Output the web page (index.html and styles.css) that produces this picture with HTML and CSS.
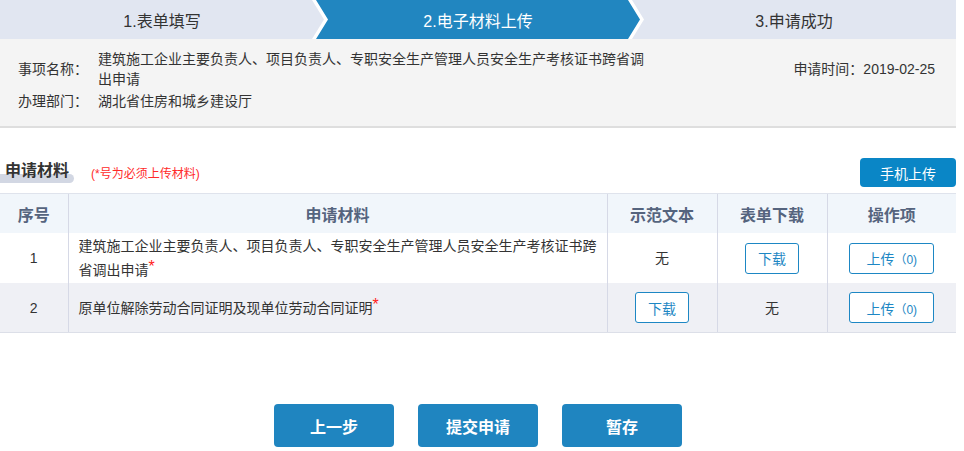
FILE: index.html
```html
<!DOCTYPE html>
<html lang="zh-CN">
<head>
    <meta charset="UTF-8">
    <meta name="viewport" content="width=device-width, initial-scale=1.0">
    <title>电子材料上传</title>
    <link rel="stylesheet" href="styles.css">
</head>
<body>
    <div class="page">
        <div class="steps">
            <div class="step step-first">1.表单填写</div>
            <div class="step step-mid active">2.电子材料上传</div>
            <div class="step step-last">3.申请成功</div>
        </div>

        <div class="info">
            <span class="info-label">事项名称：</span>
            <span class="info-value">建筑施工企业主要负责人、项目负责人、专职安全生产管理人员安全生产考核证书跨省调出申请</span>
            <span class="info-time">申请时间：2019-02-25</span>
            <span class="info-label">办理部门：</span>
            <span class="info-value">湖北省住房和城乡建设厅</span>
        </div>

        <div class="section-head">
            <h3 class="section-title">申请材料</h3>
            <span class="section-note">(*号为必须上传材料)</span>
            <button class="btn-mobile">手机上传</button>
        </div>

        <table class="materials">
            <colgroup>
                <col class="col-no">
                <col class="col-name">
                <col class="col-sample">
                <col class="col-form">
                <col class="col-op">
            </colgroup>
            <thead>
                <tr>
                    <th>序号</th>
                    <th>申请材料</th>
                    <th>示范文本</th>
                    <th>表单下载</th>
                    <th>操作项</th>
                </tr>
            </thead>
            <tbody>
                <tr>
                    <td>1</td>
                    <td class="name">建筑施工企业主要负责人、项目负责人、专职安全生产管理人员安全生产考核证书跨省调出申请<sup class="req">*</sup></td>
                    <td>无</td>
                    <td><button class="btn-line btn-down">下载</button></td>
                    <td><button class="btn-line btn-up">上传<span class="count">（0)</span></button></td>
                </tr>
                <tr>
                    <td>2</td>
                    <td class="name">原单位解除劳动合同证明及现单位劳动合同证明<sup class="req">*</sup></td>
                    <td><button class="btn-line btn-down">下载</button></td>
                    <td>无</td>
                    <td><button class="btn-line btn-up">上传<span class="count">（0)</span></button></td>
                </tr>
            </tbody>
        </table>

        <div class="actions">
            <button class="btn-main">上一步</button>
            <button class="btn-main">提交申请</button>
            <button class="btn-main">暂存</button>
        </div>
    </div>
</body>
</html>
```
FILE: styles.css
```css
body {
    margin: 0;
    background: #ffffff;
    font-family: "Liberation Sans", "Noto Sans CJK SC", sans-serif;
    font-size: 14px;
    color: #333;
}

.page {
    width: 956px;
}

/* steps */
.steps {
    display: flex;
    height: 39px;
}

.step {
    width: 324px;
    flex: none;
    display: flex;
    align-items: center;
    justify-content: center;
    background: #e1e6f1;
    color: #333;
    font-size: 16px;
}

.step-first {
    clip-path: polygon(0 0, calc(100% - 12px) 0, 100% 50%, calc(100% - 12px) 100%, 0 100%);
}

.step-mid {
    margin-left: -8px;
    clip-path: polygon(0 0, calc(100% - 12px) 0, 100% 50%, calc(100% - 12px) 100%, 0 100%, 12px 50%);
}

.step-last {
    margin-left: -8px;
    clip-path: polygon(0 0, 100% 0, 100% 100%, 0 100%, 12px 50%);
}

.step.active {
    background: #2186c0;
    color: #ffffff;
}

/* info */
.info {
    display: grid;
    grid-template-columns: 80px 550px 1fr;
    row-gap: 2px;
    align-items: center;
    padding: 10px 21px 15px 18px;
    background: #f4f4f4;
    border-bottom: 2px solid #dedede;
    line-height: 20px;
    font-size: 14px;
}

.info-time {
    justify-self: end;
}

/* section head */
.section-head {
    display: flex;
    align-items: center;
    height: 29px;
    margin: 30px 0 6px;
}

.section-title {
    position: relative;
    margin: -3px 0 0 5px;
    font-size: 16px;
    line-height: 22px;
    color: #333;
    z-index: 0;
}

.section-title::after {
    content: "";
    position: absolute;
    left: -5px;
    right: -5px;
    top: 14px;
    height: 9px;
    border-radius: 0 5px 5px 0;
    background: #d2d7e3;
    z-index: -1;
}

.section-note {
    margin-left: 22px;
    font-size: 12px;
    color: #ff2a2a;
}

.btn-mobile {
    margin-left: auto;
    width: 96px;
    height: 29px;
    border: none;
    border-radius: 4px;
    background: #0a86c6;
    color: #ffffff;
    font-family: inherit;
    font-size: 14px;
    cursor: pointer;
}

/* table */
.materials {
    width: 956px;
    border-collapse: collapse;
    table-layout: fixed;
}

.col-no { width: 68px; }
.col-name { width: 539px; }
.col-sample { width: 110px; }
.col-form { width: 110px; }
.col-op { width: 129px; }

.materials th,
.materials td {
    border-left: 1px solid #d6d9e6;
    text-align: center;
    padding: 0;
}

.materials th:first-child,
.materials td:first-child {
    border-left: none;
}

.materials th {
    height: 39px;
    background: #f1f6fb;
    border-top: 1px solid #dfe3ec;
    color: #55647e;
    font-size: 16px;
    font-weight: bold;
}

.materials td {
    height: 50px;
    font-size: 14px;
    line-height: 24px;
}

.materials tbody tr:nth-child(2) td {
    background: #eff0f5;
    border-bottom: 1px solid #dcdfe8;
    height: 49px;
}

.materials td.name {
    text-align: left;
    padding: 0 2px 0 10px;
}

.req {
    color: #ff1a1a;
    font-size: 16px;
    line-height: 0;
    vertical-align: 3px;
}

.btn-line {
    height: 31px;
    border: 1px solid #1d87c4;
    border-radius: 3px;
    background: #ffffff;
    color: #1d87c4;
    font-family: inherit;
    font-size: 14px;
    padding: 0;
    vertical-align: middle;
    cursor: pointer;
}

.btn-down { width: 54px; }
.btn-up { width: 85px; }

.btn-up .count {
    font-size: 12px;
}

/* actions */
.actions {
    display: flex;
    justify-content: center;
    gap: 24px;
    margin-top: 71px;
}

.btn-main {
    width: 120px;
    height: 43px;
    border: none;
    border-radius: 4px;
    background: #1f85c0;
    color: #ffffff;
    font-family: inherit;
    font-size: 16px;
    font-weight: bold;
    cursor: pointer;
}
```
